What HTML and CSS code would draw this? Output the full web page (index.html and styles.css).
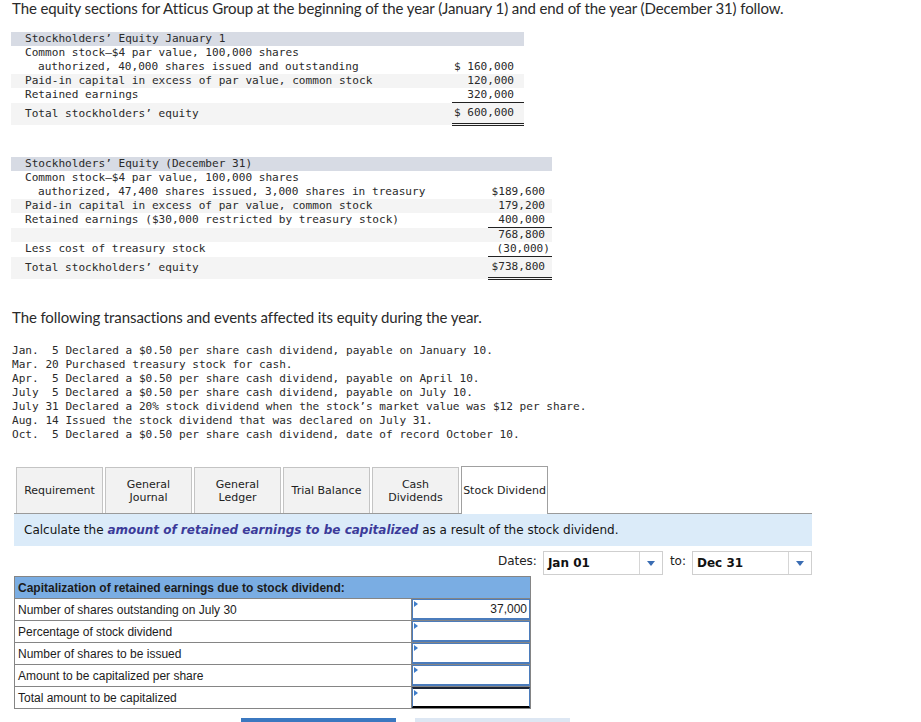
FILE: index.html
```html
<!DOCTYPE html>
<html>
<head>
<meta charset="utf-8">
<link rel="stylesheet" href="styles.css">
</head>
<body>
<p class="intro">The equity sections for Atticus Group at the beginning of the year (January 1) and end of the year (December 31) follow.</p>

<table class="eq eq1">
  <tr class="hd"><td colspan="2">Stockholders’ Equity January 1</td></tr>
  <tr><td>Common stock—$4 par value, 100,000 shares</td><td class="v"></td></tr>
  <tr><td class="ind">authorized, 40,000 shares issued and outstanding</td><td class="v">$ 160,000</td></tr>
  <tr class="alt"><td>Paid-in capital in excess of par value, common stock</td><td class="v">120,000</td></tr>
  <tr><td>Retained earnings</td><td class="v ul">320,000</td></tr>
  <tr class="alt tot"><td>Total stockholders’ equity</td><td class="v dbl">$ 600,000</td></tr>
</table>

<table class="eq eq2">
  <tr class="hd"><td colspan="2">Stockholders’ Equity (December 31)</td></tr>
  <tr><td>Common stock—$4 par value, 100,000 shares</td><td class="v"></td></tr>
  <tr><td class="ind">authorized, 47,400 shares issued, 3,000 shares in treasury</td><td class="v">$189,600</td></tr>
  <tr class="alt"><td>Paid-in capital in excess of par value, common stock</td><td class="v">179,200</td></tr>
  <tr><td>Retained earnings ($30,000 restricted by treasury stock)</td><td class="v ul">400,000</td></tr>
  <tr class="alt"><td></td><td class="v">768,800</td></tr>
  <tr><td>Less cost of treasury stock</td><td class="v ul">(30,000<span class="hang">)</span></td></tr>
  <tr class="alt tot"><td>Total stockholders’ equity</td><td class="v dbl">$738,800</td></tr>
</table>

<p class="lead">The following transactions and events affected its equity during the year.</p>

<pre class="trans">Jan.  5 Declared a $0.50 per share cash dividend, payable on January 10.
Mar. 20 Purchased treasury stock for cash.
Apr.  5 Declared a $0.50 per share cash dividend, payable on April 10.
July  5 Declared a $0.50 per share cash dividend, payable on July 10.
July 31 Declared a 20% stock dividend when the stock’s market value was $12 per share.
Aug. 14 Issued the stock dividend that was declared on July 31.
Oct.  5 Declared a $0.50 per share cash dividend, date of record October 10.</pre>

<div class="tabs">
  <div class="tab">Requirement</div>
  <div class="tab">General<br>Journal</div>
  <div class="tab">General<br>Ledger</div>
  <div class="tab">Trial Balance</div>
  <div class="tab">Cash<br>Dividends</div>
  <div class="tab active">Stock Dividend</div>
</div>
<div class="instr">Calculate the <em>amount of retained earnings to be capitalized</em> as a result of the stock dividend.</div>

<div class="dates">
  <span class="dlabel">Dates:</span>
  <div class="sel"><span class="selv">Jan 01</span><span class="arr"><i></i></span></div>
  <span class="dlabel to">to:</span>
  <div class="sel"><span class="selv">Dec 31</span><span class="arr"><i></i></span></div>
</div>

<table class="cap">
  <tr class="caph"><td colspan="2">Capitalization of retained earnings due to stock dividend:</td></tr>
  <tr><td class="lbl">Number of shares outstanding on July 30</td><td class="in"><div class="box">37,000</div></td></tr>
  <tr><td class="lbl">Percentage of stock dividend</td><td class="in"><div class="box"></div></td></tr>
  <tr><td class="lbl">Number of shares to be issued</td><td class="in"><div class="box"></div></td></tr>
  <tr><td class="lbl">Amount to be capitalized per share</td><td class="in"><div class="box"></div></td></tr>
  <tr><td class="lbl">Total amount to be capitalized</td><td class="in"><div class="box total"></div></td></tr>
</table>

<div class="btns">
  <div class="btn prev"></div>
  <div class="btn next"></div>
</div>
</body>
</html>
```

FILE: styles.css
```css
html, body {
  margin: 0;
  padding: 0;
  background: #fff;
}
body {
  font-family: "Lato", "Open Sans", sans-serif;
  color: #2a2a2a;
  overflow: hidden;
}
.intro {
  margin: 0 0 0 12px;
  font-size: 15px;
  line-height: 16px;
  height: 32px;
  letter-spacing: -0.1px;
}
.eq {
  border-collapse: collapse;
  margin-left: 11px;
  font-family: "DejaVu Sans Mono", "Liberation Mono", monospace;
  font-size: 11.1px;
  color: #2a2a2a;
}
.eq td {
  padding: 0 0 0 14px;
  height: 14px;
  line-height: 14px;
  white-space: pre;
}
.eq td.ind { padding-left: 27px; }
.eq tr.hd td { background: #d7dbe4; }
.eq tr.alt td { background: #f4f4f4; }
.eq tr.tot td { height: 20px; line-height: 20px; }
.eq td.v {
  text-align: right;
  padding-left: 0;
}
.eq1 { width: 513px; }
.eq1 td.v { width: 62px; padding-right: 10px; }
.eq2 { width: 541px; margin-top: 31px; }
.eq2 td.v { width: 57px; padding-right: 7px; }
.eq td.ul { border-bottom: 1px solid #222; }
.eq td.dbl { border-top: 1px solid #222; border-bottom: 3px double #222; }
.hang { margin-right: -5px; }

.lead {
  margin: 29px 0 0 12px;
  font-size: 15px;
  line-height: 16px;
  letter-spacing: -0.1px;
}
.trans {
  margin: 19px 0 0 12px;
  font-family: "DejaVu Sans Mono", "Liberation Mono", monospace;
  font-size: 11.1px;
  line-height: 14px;
  color: #2a2a2a;
}

.tabs {
  display: flex;
  gap: 2px;
  margin: 24px 0 0 14px;
  width: 796px;
  padding-left: 2px;
  border-bottom: 1px solid #9a9a9a;
  height: 47px;
  font-family: "DejaVu Sans", Verdana, sans-serif;
  font-size: 11px;
  line-height: 13px;
  color: #222;
}
.tab {
  width: 85px;
  height: 45px;
  border: 1px solid #c4c4c4;
  border-bottom: none;
  background: #f2f2f2;
  display: flex;
  align-items: center;
  justify-content: center;
  text-align: center;
  margin-top: 1px;
}
.tab.active {
  background: #fff;
  border-color: #a0a0a0;
  height: 47px;
  margin-top: 0;
  position: relative;
  z-index: 1;
  white-space: nowrap;
}
.instr {
  margin-left: 14px;
  width: 798px;
  height: 32px;
  background: #dbebf9;
  font-family: "DejaVu Sans", Verdana, sans-serif;
  font-size: 12px;
  line-height: 32px;
  color: #151515;
  box-sizing: border-box;
  padding-left: 10px;
}
.instr em {
  font-weight: bold;
  color: #3b3b9a;
}

.dates {
  display: flex;
  align-items: flex-start;
  justify-content: flex-end;
  width: 812px;
  margin-top: 5px;
  font-family: "DejaVu Sans", Verdana, sans-serif;
  font-size: 12px;
  color: #222;
}
.dlabel {
  line-height: 20px;
  margin-right: 6px;
}
.dlabel.to { margin-left: 7px; }
.sel {
  width: 118px;
  height: 22px;
  border: 1px solid #cfcfcf;
  display: flex;
}
.selv {
  flex: 1;
  font-weight: bold;
  line-height: 22px;
  padding-left: 4px;
  color: #111;
}
.arr {
  width: 22px;
  border-left: 1px solid #d6d6d6;
  display: flex;
  align-items: center;
  justify-content: center;
}
.arr i {
  display: block;
  width: 0;
  height: 0;
  border-left: 4px solid transparent;
  border-right: 4px solid transparent;
  border-top: 5px solid #3a6db3;
}

.cap {
  margin: 1px 0 0 14px;
  border-collapse: collapse;
  width: 517px;
  font-family: "Liberation Sans", Arial, sans-serif;
  font-size: 12px;
  color: #1c1c1c;
}
.cap td {
  border: 1px solid #858585;
  height: 21px;
  padding: 0;
}
.cap tr.caph td {
  background: #7aade3;
  font-weight: bold;
  padding-left: 3px;
  height: 21px;
}
.cap td.lbl {
  padding-left: 3px;
  width: 393px;
}
.cap td.in {
  width: 118px;
  border-left: 1px solid #6a6a6a;
}
.box {
  position: relative;
  height: 18px;
  border: 1px solid #4b7cbc;
  border-width: 1px 1px 2px 1px;
  text-align: right;
  line-height: 19px;
  padding-right: 2px;
}
.box::before {
  content: "";
  position: absolute;
  left: 1px;
  top: 1px;
  width: 0;
  height: 0;
  border-top: 3px solid transparent;
  border-bottom: 3px solid transparent;
  border-left: 4px solid #3d7cc9;
}
.box.total {
  border-top: 2px solid #1d2535;
  border-bottom: 2px solid #000;
  height: 17px;
}

.btns {
  display: flex;
  gap: 19px;
  margin: 9px 0 0 241px;
}
.btn {
  width: 155px;
  height: 30px;
}
.btn.prev { background: #3b78c0; }
.btn.next { background: #dde7f3; }
```
